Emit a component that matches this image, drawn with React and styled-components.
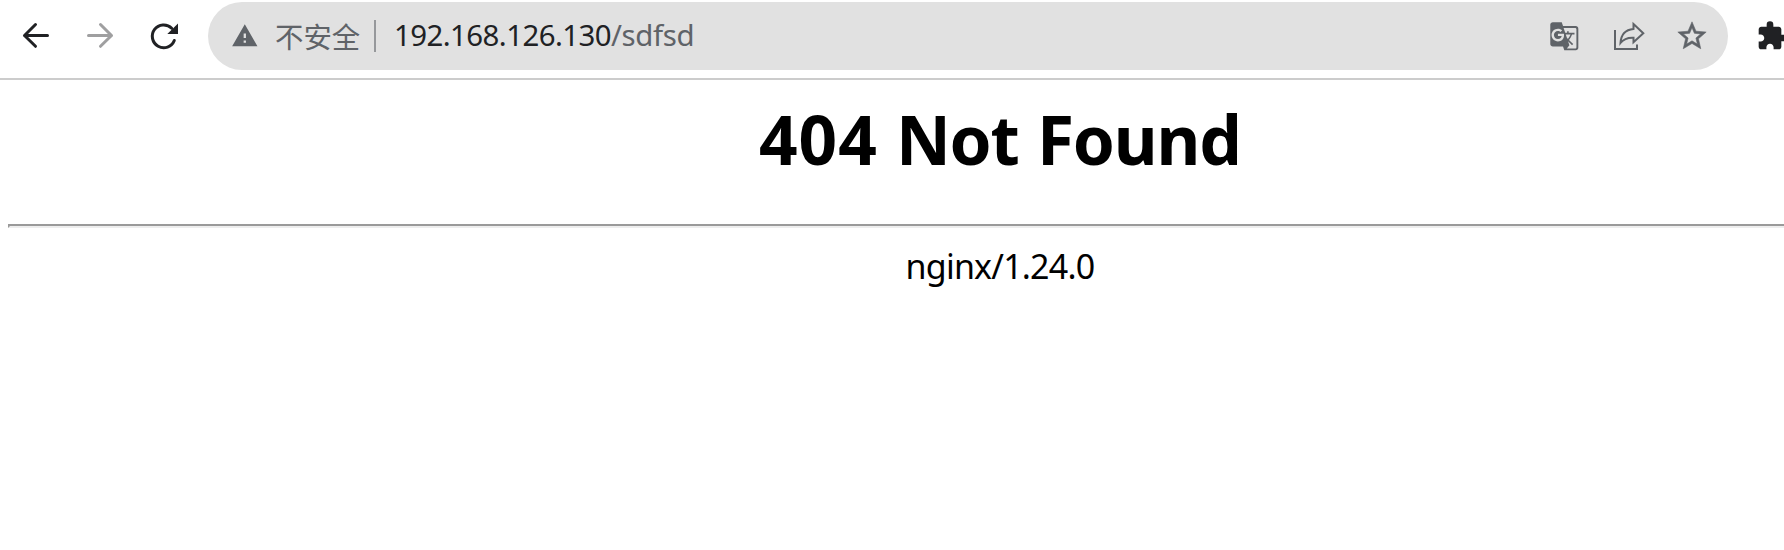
import React from "react";
import styled, { createGlobalStyle } from "styled-components";
import { MdGTranslate, MdStarBorder, MdExtension, MdWarning } from "react-icons/md";

const GlobalStyle = createGlobalStyle`
  * { box-sizing: border-box; }
  body {
    margin: 0;
    background: #fff;
    overflow: hidden;
    font-family: "Noto Sans", "Noto Sans CJK SC", sans-serif;
  }
`;

const Screen = styled.div`
  width: 100%;
  height: 550px;
  overflow: hidden;
`;

const Toolbar = styled.header`
  display: flex;
  align-items: flex-start;
  width: 100%;
  height: 80px;
  padding: 2px 0 0 20px;
  border-bottom: 2px solid #cccccc;
  overflow: hidden;
`;

const NavButtons = styled.nav`
  display: flex;
  align-items: center;
  flex: none;
  gap: 32px;
  width: 188px;
  height: 68px;
`;

const NavButton = styled.button`
  display: flex;
  flex: none;
  width: 32px;
  height: 32px;
  padding: 0;
  border: 0;
  background: none;
  color: ${(p) => (p.$muted ? "#9f9fa0" : "#202124")};
`;

const AddressBar = styled.div`
  display: flex;
  align-items: center;
  flex: none;
  width: 1520px;
  height: 68px;
  padding: 0 19px 0 23px;
  border-radius: 34px;
  background: #e1e1e1;
  color: #5f6368;
`;

const WarningIcon = styled(MdWarning)`
  flex: none;
  width: 27.6px;
  height: 27.6px;
`;

const Security = styled.span`
  width: 99px;
  margin-left: 16.4px;
  font: 28.4px/40px "Noto Sans CJK SC", sans-serif;
  padding-bottom: 1px;
  white-space: nowrap;
`;

const Separator = styled.span`
  width: 2px;
  height: 32px;
  margin-right: 18px;
  background: #96989b;
`;

const Url = styled.span`
  flex: 1;
  padding-bottom: 2px;
  font-size: 29.4px;
  line-height: 40px;
  letter-spacing: -0.35px;
  white-space: nowrap;
`;

const Host = styled.span`
  color: #202124;
  letter-spacing: -0.56px;
`;

const Actions = styled.div`
  display: flex;
  align-items: center;
  gap: 30px;
`;

const Action = styled.span`
  display: flex;
  align-items: center;
  justify-content: center;
  width: 34px;
  height: 34px;
  svg {
    flex: none;
    width: ${(p) => p.$size || 34}px;
    height: ${(p) => p.$size || 34}px;
    overflow: visible;
  }
`;

const StarIcon = styled(MdStarBorder)`
  path:last-child {
    stroke: currentColor;
    stroke-width: 0.4px;
  }
`;

const ExtensionIcon = styled(MdExtension)`
  flex: none;
  width: 32px;
  height: 32px;
  margin: 18px 0 0 28px;
  color: #202124;
`;

const Page = styled.main`
  width: 2000px;
  padding: 0 8px;
  text-align: center;
  color: #000;
`;

const Title = styled.h1`
  display: flex;
  justify-content: center;
  margin: 0;
  padding-top: 11px;
  height: 144px;
  font-size: 67.5px;
  line-height: 96px;
  font-weight: 700;
`;

const Word = styled.span`
  width: ${(p) => p.$width}px;
  letter-spacing: ${(p) => p.$spacing}px;
  text-align: left;
  white-space: pre;
`;

const Rule = styled.hr`
  height: 4px;
  margin: 0;
  border: 2px solid;
  border-color: #9a9a9a #eeeeee #eeeeee #9a9a9a;
`;

const Server = styled.p`
  margin: 14px 0 0;
  font-size: 34px;
  line-height: 48px;
  letter-spacing: -0.8px;
`;

const Stroke = ({ children, size = 32, width = 3 }) => (
  <svg
    width={size}
    height={size}
    viewBox={`0 0 ${size} ${size}`}
    fill="none"
    stroke="currentColor"
    strokeWidth={width}
    strokeLinecap="round"
    strokeLinejoin="round"
  >
    {children}
  </svg>
);

export default function App() {
  return (
    <Screen>
      <GlobalStyle />
      <Toolbar>
        <NavButtons>
          <NavButton aria-label="Back">
            <Stroke><path d="M27.5 15.5H4.5M15.5 4.5L4.5 15.5L15.5 26.3" /></Stroke>
          </NavButton>
          <NavButton aria-label="Forward" $muted>
            <Stroke><path d="M4.5 15.5H27.5M16.5 4.5L27.5 15.5L16.5 26.3" /></Stroke>
          </NavButton>
          <NavButton aria-label="Reload">
            <Stroke>
              <path d="M23.7 8.2A11.4 11.4 0 1 0 26.3 20.5" />
              <path d="M30 3.5V14H19.3Z" fill="currentColor" stroke="none" />
            </Stroke>
          </NavButton>
        </NavButtons>
        <AddressBar>
          <WarningIcon />
          <Security>不安全</Security>
          <Separator />
          <Url><Host>192.168.126.130</Host>/sdfsd</Url>
          <Actions>
            <Action $size={30.6}><MdGTranslate /></Action>
            <Action>
              <Stroke size={34} width={2}>
                <path
                  d="M4 11V30H26V25.5M22.5 5L32.3 14.3L22.5 23.2V18.8C16.5 18.5 12.5 20.2 9.5 24C10 15.5 14.5 10.6 22.5 9.9Z"
                  strokeLinecap="butt"
                  strokeLinejoin="miter"
                />
              </Stroke>
            </Action>
            <Action><StarIcon /></Action>
          </Actions>
        </AddressBar>
        <ExtensionIcon />
      </Toolbar>
      <Page>
        <Title>
          <Word $width={137} $spacing={1}>{"404 "}</Word>
          <Word $width={141} $spacing={-1.3}>{"Not "}</Word>
          <Word $width={204} $spacing={-1.2}>Found</Word>
        </Title>
        <Rule />
        <Server>nginx/1.24.0</Server>
      </Page>
    </Screen>
  );
}
